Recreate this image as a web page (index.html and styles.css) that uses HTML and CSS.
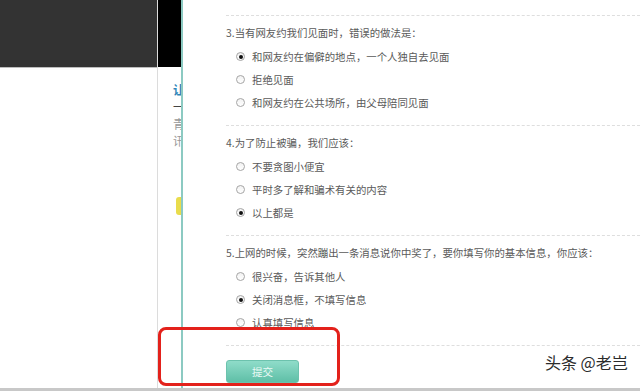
FILE: index.html
```html
<!DOCTYPE html>
<html lang="zh-CN">
<head>
    <meta charset="UTF-8">
    <meta name="viewport" content="width=device-width, initial-scale=1.0">
    <title>网络安全小测验</title>
    <link rel="stylesheet" href="styles.css">
</head>
<body>
    <div class="screen">
        <div class="side">
            <div class="side-top"></div>
        </div>
        <div class="strip">
            <div class="strip-top"></div>
            <div class="strip-body">
                <span class="peek blue">让</span>
                <span class="peek">一</span>
                <span class="peek gray">青</span>
                <span class="peek gray">讯</span>
                <span class="tag"></span>
            </div>
        </div>
        <div class="divider"></div>

        <div class="quiz">
            <div class="question">
                <p class="q-title">3.当有网友约我们见面时，错误的做法是：</p>
                <ul class="options">
                    <li><span class="radio checked"></span>和网友约在偏僻的地点，一个人独自去见面</li>
                    <li><span class="radio"></span>拒绝见面</li>
                    <li><span class="radio"></span>和网友约在公共场所，由父母陪同见面</li>
                </ul>
            </div>
            <div class="question">
                <p class="q-title">4.为了防止被骗，我们应该：</p>
                <ul class="options">
                    <li><span class="radio"></span>不要贪图小便宜</li>
                    <li><span class="radio"></span>平时多了解和骗术有关的内容</li>
                    <li><span class="radio checked"></span>以上都是</li>
                </ul>
            </div>
            <div class="question">
                <p class="q-title">5.上网的时候，突然蹦出一条消息说你中奖了，要你填写你的基本信息，你应该：</p>
                <ul class="options">
                    <li><span class="radio"></span>很兴奋，告诉其他人</li>
                    <li><span class="radio checked"></span>关闭消息框，不填写信息</li>
                    <li><span class="radio"></span>认真填写信息</li>
                </ul>
            </div>
            <div class="actions">
                <button class="submit">提交</button>
            </div>
        </div>
    </div>
    <div class="statusbar"></div>

    <!-- 标注框与水印 -->
    <div class="mark"></div>
    <div class="watermark">头条 @老岂</div>
</body>
</html>
```

FILE: styles.css
```css
html, body {
    margin: 0;
    padding: 0;
}
body {
    width: 640px;
    height: 391px;
    overflow: hidden;
    background: #fff;
    font-family: "Noto Sans CJK SC", "Noto Sans", sans-serif;
    position: relative;
}
.screen {
    display: flex;
    height: 388px;
}
.side {
    width: 158px;
    border-right: 1px solid #dcdcdc;
    box-sizing: border-box;
}
.side-top {
    height: 67px;
    background: #333;
    border-bottom: 1px solid #bdbdbd;
}
.strip {
    width: 23px;
    overflow: hidden;
}
.strip-top {
    height: 67px;
    background: #000;
}
.strip-body {
    display: flex;
    flex-direction: column;
    padding: 14px 0 0 15px;
    width: 40px;
}
.peek {
    font-size: 12px;
    line-height: 17px;
    color: #444;
}
.peek.blue {
    color: #2f86b8;
    font-weight: bold;
}
.peek.gray {
    color: #999;
}
.tag {
    width: 8px;
    height: 18px;
    margin-top: 48px;
    margin-left: 3px;
    background: #e9dc4c;
    border-radius: 3px;
}
.divider {
    width: 2px;
    background: #8ccac2;
}
.quiz {
    flex: 1;
    padding: 15px 0 0 43px;
    color: #5a5a5a;
    font-size: 10.4px;
}
.question {
    border-top: 1px dashed #dedede;
    padding: 6px 0 11px;
}
.q-title {
    margin: 0;
    line-height: 22px;
}
.options {
    list-style: none;
    margin: 1px 0 0;
    padding: 0 0 0 10px;
}
.options li {
    display: flex;
    align-items: center;
    height: 23px;
}
.radio {
    width: 9px;
    height: 9px;
    border: 1px solid #a5a5a5;
    border-radius: 50%;
    box-sizing: border-box;
    margin-right: 7px;
    background: linear-gradient(#f2f2f2, #fff);
    display: flex;
    align-items: center;
    justify-content: center;
}
.radio.checked::after {
    content: "";
    width: 4px;
    height: 4px;
    border-radius: 50%;
    background: #111;
}
.actions {
    border-top: 1px dashed #dedede;
    padding-top: 14px;
}
.submit {
    width: 73px;
    height: 23px;
    border: 1px solid #6cc2ad;
    border-radius: 3px;
    background: linear-gradient(#8fdcc9, #5fbfa7);
    color: #eafaf5;
    font-family: inherit;
    font-size: 10.6px;
    padding: 0;
}
.statusbar {
    height: 3px;
    background: #c8c8c8;
}
.mark {
    position: absolute;
    left: 158px;
    top: 327px;
    width: 182px;
    height: 59px;
    box-sizing: border-box;
    border: 3px solid #e3211b;
    border-radius: 8px;
}
.watermark {
    position: absolute;
    left: 545px;
    top: 350px;
    font-size: 16px;
    line-height: 24px;
    color: #2b2b2b;
    text-shadow: 0 0 2px #fff, 0 0 2px #fff;
}
```
